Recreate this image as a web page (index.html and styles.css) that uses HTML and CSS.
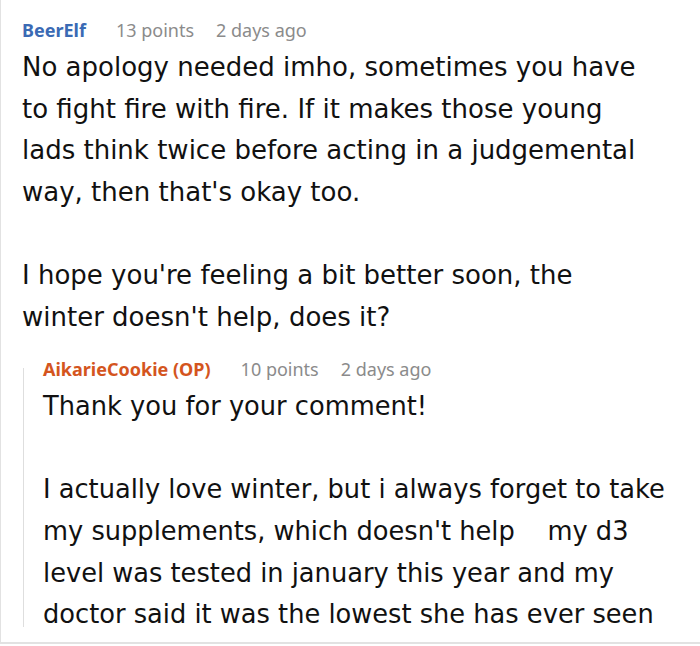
FILE: index.html
```html
<!DOCTYPE html>
<html>
<head>
<meta charset="utf-8">
<link rel="stylesheet" href="styles.css">
</head>
<body>
<div class="thread">
  <div class="comment">
    <div class="meta"><span class="author">BeerElf</span><span class="info">13 points</span><span class="info">2 days ago</span></div>
    <div class="body">
      <p>No apology needed imho, sometimes you have to fight fire with fire. If it makes those young lads think twice before acting in a judgemental way, then that's okay too.</p>
      <p>I hope you're feeling a bit better soon, the winter doesn't help, does it?</p>
    </div>
    <div class="reply">
      <div class="reply-line"></div>
      <div class="reply-content">
        <div class="meta"><span class="author op">AikarieCookie (OP)</span><span class="info">10 points</span><span class="info">2 days ago</span></div>
        <div class="body reply-body">
          <p>Thank you for your comment!</p>
          <p>I actually love winter, but i always forget to take my supplements, which doesn't help&nbsp;&nbsp;&nbsp; my d3 level was tested in january this year and my doctor said it was the lowest she has ever seen</p>
        </div>
      </div>
    </div>
  </div>
</div>
</body>
</html>
```
FILE: styles.css
```css
html, body { margin: 0; padding: 0; background: #fff; }
body { font-family: "DejaVu Sans", sans-serif; color: #111; }
.thread {
  width: 699px;
  height: 642px;
  border-left: 1px solid #e2e2e2;
  border-bottom: 2px solid #e2e2e2;
  overflow: hidden;
}
.comment { padding: 18px 0 0 21px; width: 629px; }
.meta {
  display: flex;
  font-family: "Noto Sans", sans-serif;
  font-size: 18px;
  line-height: 24px;
  margin-bottom: 5px;
  white-space: nowrap;
}
.author { font-weight: 700; color: #3a6ab4; margin-right: 30px; }
.author.op { color: #d4551e; }
.info { color: #8b8b8b; margin-right: 22px; }
.body { font-size: 26px; line-height: 41.6px; }
.body p { margin: 0 0 41.6px 0; }
.body p:last-child { margin-bottom: 0; }
.reply-body { font-size: 25.7px; }
.reply {
  display: flex;
  margin: 19px -40px 0 1px;
}
.reply-line {
  flex: 0 0 1px;
  background: #dedede;
  margin: 11px 0 9px 0;
}
.reply-content { flex: 1; padding-left: 19px; }
```
